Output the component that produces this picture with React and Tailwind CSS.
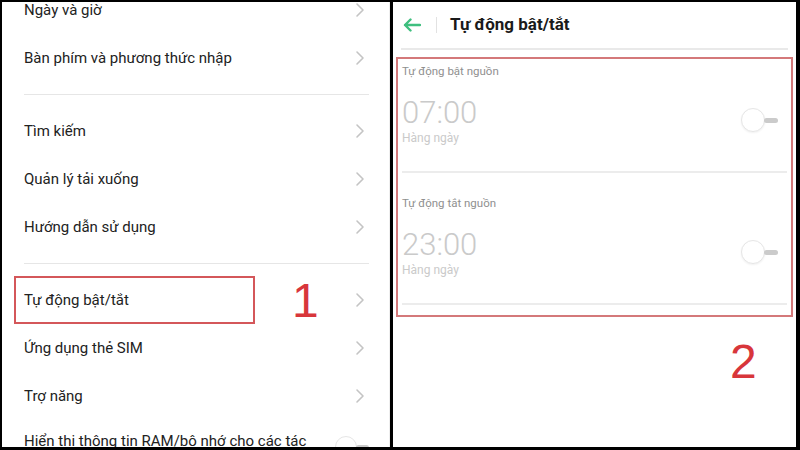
import React from "react";

const Chevron = () => (
  <svg width="10" height="16" viewBox="0 0 10 16" fill="none">
    <path d="M2 2l6 6-6 6" stroke="#c4c4c4" strokeWidth="1.6" strokeLinecap="round" strokeLinejoin="round" />
  </svg>
);

const Row = ({ label }) => (
  <div className="h-[48px] flex items-center justify-between pl-[22px] pr-[24px]">
    <span className="text-[15px] text-[#222]">{label}</span>
    <Chevron />
  </div>
);

const Divider = () => (
  <div className="py-[12px] pl-[22px] pr-[20px]">
    <div className="h-px bg-[#e6e6e6]" />
  </div>
);

const Toggle = () => (
  <div className="flex items-center">
    <div className="w-[24px] h-[24px] rounded-full border border-[#e6e6e6] bg-white shadow-[0_1px_2px_rgba(0,0,0,0.06)]" />
    <div className="w-[14px] h-[5px] rounded-full bg-[#cbcbcb] -ml-px" />
  </div>
);

const TimeBlock = ({ title, time, top }) => (
  <div>
    <div className={`text-[11.5px] leading-[14px] text-[#8f8f8f] ${top}`}>{title}</div>
    <div className="flex items-center justify-between pr-[9px] mt-[17px]">
      <div>
        <div className="text-[31px] leading-[36px] text-[#cacaca] font-light">{time}</div>
        <div className="text-[12px] leading-[14px] text-[#cacaca]">Hàng ngày</div>
      </div>
      <Toggle />
    </div>
  </div>
);

export default function App() {
  return (
    <div
      className="w-[800px] h-[450px] bg-black flex pt-[2px] pl-[2px] pb-[3px] pr-[4px] gap-[3px] overflow-hidden"
      style={{ fontFamily: "Roboto, 'Noto Sans', sans-serif" }}
    >
      {/* Left panel */}
      <div className="relative w-[388px] bg-white overflow-hidden border-r border-[#eeeeee]">
        <div className="-mt-[16px]">
          <Row label="Ngày và giờ" />
          <Row label="Bàn phím và phương thức nhập" />
          <Divider />
          <Row label="Tìm kiếm" />
          <Row label="Quản lý tải xuống" />
          <Row label="Hướng dẫn sử dụng" />
          <Divider />
          <Row label="Tự động bật/tắt" />
          <Row label="Ứng dụng thẻ SIM" />
          <Row label="Trợ năng" />
          <div className="h-[48px] flex items-start justify-between pl-[22px] pr-[20px] pt-[10px]">
            <span className="text-[15px] text-[#222]">Hiển thị thông tin RAM/bộ nhớ cho các tác</span>
            <div className="mt-[6px] flex items-center">
              <div className="w-[22px] h-[22px] rounded-full border border-[#e6e6e6] bg-white" />
              <div className="w-[13px] h-[5px] rounded-full bg-[#cbcbcb] -ml-px" />
            </div>
          </div>
        </div>
        {/* annotation 1 */}
        <div className="absolute left-[12px] top-[274px] w-[241px] h-[48px] border-2 border-[#d4575a]" />
        <div
          className="absolute left-[290px] top-[272px] text-[48px] leading-[54px] text-[#d8363b]"
          style={{ fontFamily: "'Liberation Sans', Arial, sans-serif" }}
        >
          1
        </div>
      </div>

      {/* Right panel */}
      <div className="relative flex-1 bg-white overflow-hidden">
        <div className="h-[46px] flex items-center pl-[10px]">
          <svg width="18" height="14" viewBox="0 0 18 14" fill="none">
            <path d="M17 7H2M7.5 1.5L2 7l5.5 5.5" stroke="#3fbf7f" strokeWidth="2.4" strokeLinecap="round" strokeLinejoin="round" />
          </svg>
          <div className="w-px h-[16px] bg-[#e2e2e2] ml-[15px]" />
          <div className="ml-[13px] text-[17px] font-bold text-[#1a1a1a]">Tự động bật/tắt</div>
        </div>
        <div className="mx-[8px] h-[2px] bg-[#e9e9e9]" />
        <div className="mt-[7px] mx-[3px] h-[260px] border-2 border-[#d4797a] px-[4px]">
          <TimeBlock title="Tự động bật nguồn" time="07:00" top="pt-[5px]" />
          <div className="mt-[26px] h-[2px] bg-[#ececec]" />
          <TimeBlock title="Tự động tắt nguồn" time="23:00" top="pt-[23px]" />
          <div className="mt-[26px] h-[2px] bg-[#ececec]" />
        </div>
        <div
          className="absolute left-[337px] top-[332px] text-[48px] leading-[56px] text-[#d8363b]"
          style={{ fontFamily: "'Liberation Sans', Arial, sans-serif" }}
        >
          2
        </div>
      </div>
    </div>
  );
}
